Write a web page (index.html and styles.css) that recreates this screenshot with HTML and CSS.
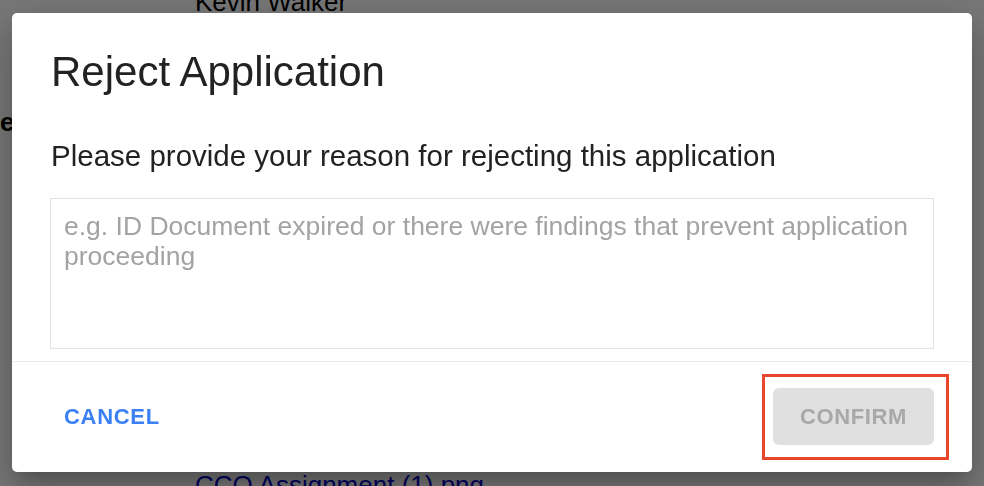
FILE: index.html
```html
<!DOCTYPE html>
<html lang="en">
<head>
<meta charset="utf-8">
<title>Reject Application</title>
<link rel="stylesheet" href="styles.css">
</head>
<body>
<div class="page">
  <div class="page-name">Kevin Walker</div>
  <div class="page-label">e</div>
  <a class="page-link" href="#">CCO Assignment (1).png</a>
</div>
<div class="backdrop">
  <div class="dialog" role="dialog" aria-labelledby="dlg-title">
    <div class="dialog-body">
      <h2 class="dialog-title" id="dlg-title">Reject Application</h2>
      <p class="dialog-text">Please provide your reason for rejecting this application</p>
      <textarea class="reason" placeholder="e.g. ID Document expired or there were findings that prevent application proceeding"></textarea>
    </div>
    <div class="dialog-actions">
      <button class="btn-text" type="button">Cancel</button>
      <span class="highlight">
        <button class="btn-confirm" type="button" disabled>Confirm</button>
      </span>
    </div>
  </div>
</div>
</body>
</html>
```
FILE: styles.css
```css
* { box-sizing: border-box; }
html, body { margin: 0; padding: 0; }
body {
  width: 984px;
  height: 486px;
  overflow: hidden;
  background: #ffffff;
  font-family: "Liberation Sans", Arial, Helvetica, sans-serif;
  color: #000;
}
.page {
  display: flex;
  flex-direction: column;
  height: 486px;
}
.page-name {
  font-size: 26px;
  line-height: 30px;
  margin-top: -13px;
  padding-left: 195px;
}
.page-label {
  font-size: 26px;
  font-weight: bold;
  line-height: 30px;
  margin-top: 90px;
  padding-left: 0;
}
.page-link {
  margin-top: auto;
  margin-left: 195px;
  margin-bottom: -14px;
  font-size: 26px;
  line-height: 30px;
  color: #0000cc;
  text-decoration: none;
}
.backdrop {
  position: fixed;
  inset: 0;
  background: rgba(0, 0, 0, 0.535);
  padding: 13px 12px 14px 12px;
  display: flex;
}
.dialog {
  flex: 1;
  background: #ffffff;
  border-radius: 5px;
  display: flex;
  flex-direction: column;
  box-shadow: 0 11px 15px -7px rgba(0,0,0,0.2), 0 24px 38px 3px rgba(0,0,0,0.14), 0 9px 46px 8px rgba(0,0,0,0.12);
}
.dialog-body {
  padding: 34px 38px 12px 38px;
  border-bottom: 1px solid #ebebeb;
  display: flex;
  flex-direction: column;
}
.dialog-title {
  margin: 0;
  padding-left: 1px;
  font-size: 42px;
  line-height: 50px;
  font-weight: normal;
  color: #222222;
}
.dialog-text {
  margin: 43px 0 0 0;
  padding-left: 1px;
  font-size: 29.5px;
  line-height: 32px;
  color: #222222;
}
.reason {
  margin-top: 26px;
  width: 884px;
  height: 151px;
  border: 1px solid #e2e2e2;
  border-radius: 0;
  padding: 12px 13px;
  font-family: "Liberation Sans", Arial, Helvetica, sans-serif;
  font-size: 26.5px;
  line-height: 30px;
  color: #222;
  resize: none;
  outline: none;
  display: block;
}
.reason::placeholder {
  color: #a3a3a3;
  opacity: 1;
}
.dialog-actions {
  flex: 1;
  display: flex;
  align-items: center;
  justify-content: space-between;
  padding: 0 23px 0 40px;
}
.btn-text {
  background: none;
  border: none;
  padding: 8px 12px;
  font-family: "Liberation Sans", Arial, Helvetica, sans-serif;
  font-size: 22px;
  font-weight: bold;
  letter-spacing: 0.7px;
  text-transform: uppercase;
  color: #3c80f5;
  cursor: pointer;
}
.highlight {
  display: inline-flex;
  border: 3px solid #e8472e;
  padding: 11px 12px 12px 8px;
}
.btn-confirm {
  width: 161px;
  height: 57px;
  border: none;
  border-radius: 6px;
  background: #e0e0e0;
  font-family: "Liberation Sans", Arial, Helvetica, sans-serif;
  font-size: 22px;
  font-weight: bold;
  letter-spacing: 0.6px;
  text-transform: uppercase;
  color: #a8a8a8;
  padding: 0;
}
```
